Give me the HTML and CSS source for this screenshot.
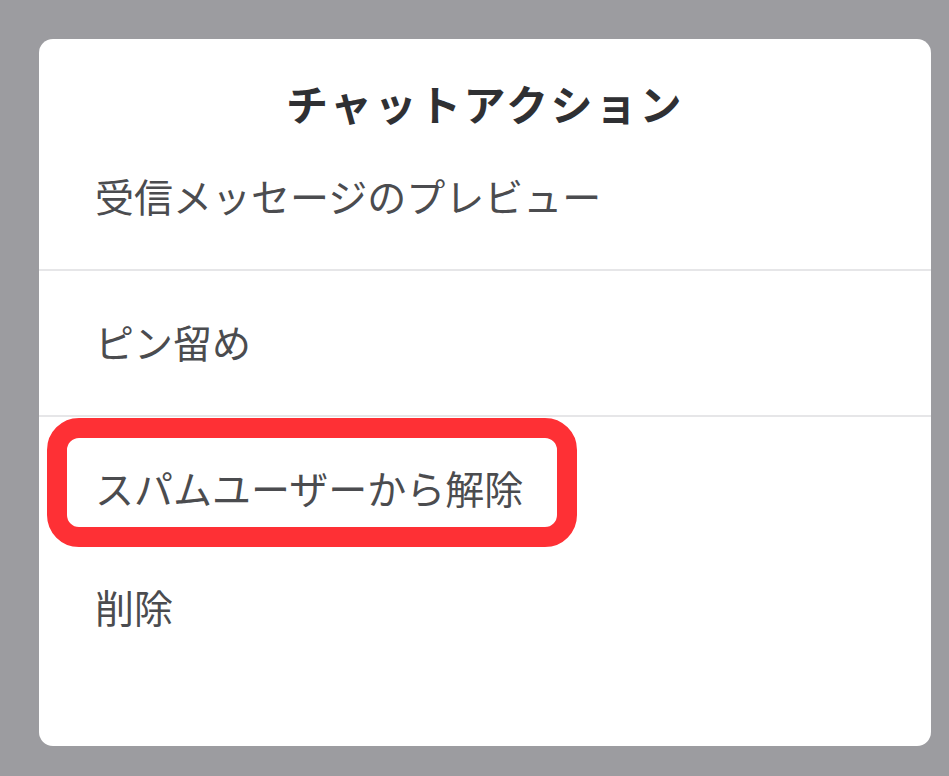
FILE: index.html
```html
<!DOCTYPE html>
<html lang="ja">
<head>
    <meta charset="UTF-8">
    <title>チャットアクション</title>
    <link rel="stylesheet" href="styles.css">
</head>
<body class="pantalla">
    <div class="hoja">
        <div class="hoja-titulo">チャットアクション</div>
        <div class="accion con-linea">受信メッセージのプレビュー</div>
        <div class="accion con-linea">ピン留め</div>
        <div class="accion marcada">
            スパムユーザーから解除
            <span class="marco"></span>
        </div>
        <div class="accion ultima">削除</div>
    </div>
</body>
</html>
```

FILE: styles.css
```css
/* fondo gris detras de la hoja */
.pantalla {
    margin: 0;
    background-color: #9c9ca0;
    padding: 39px 18px 30px 39px;
    font-family: "Noto Sans CJK JP", "Noto Sans", sans-serif;
}

.hoja {
    background-color: #fff;
    border-radius: 14px;
    height: 707px;
    overflow: hidden;
}

.hoja-titulo {
    padding-top: 44px;
    line-height: 40px;
    height: 42px;
    font-size: 42px;
    font-weight: bold;
    text-align: center;
    color: #2f3033;
    letter-spacing: 2.5px;
}

.accion {
    height: 140px;
    display: flex;
    align-items: center;
    padding-left: 56px;
    padding-bottom: 4px;
    font-size: 39px;
    color: #4b4c4f;
    position: relative;
}

.con-linea {
    border-bottom: 2px solid #e6e6e8;
}

.ultima {
    height: 90px;
}

/* recuadro rojo sobre la opcion */
.marco {
    position: absolute;
    left: 8px;
    top: 1px;
    width: 490px;
    height: 89px;
    border: 20px solid #fe3035;
    border-radius: 32px;
}
```
